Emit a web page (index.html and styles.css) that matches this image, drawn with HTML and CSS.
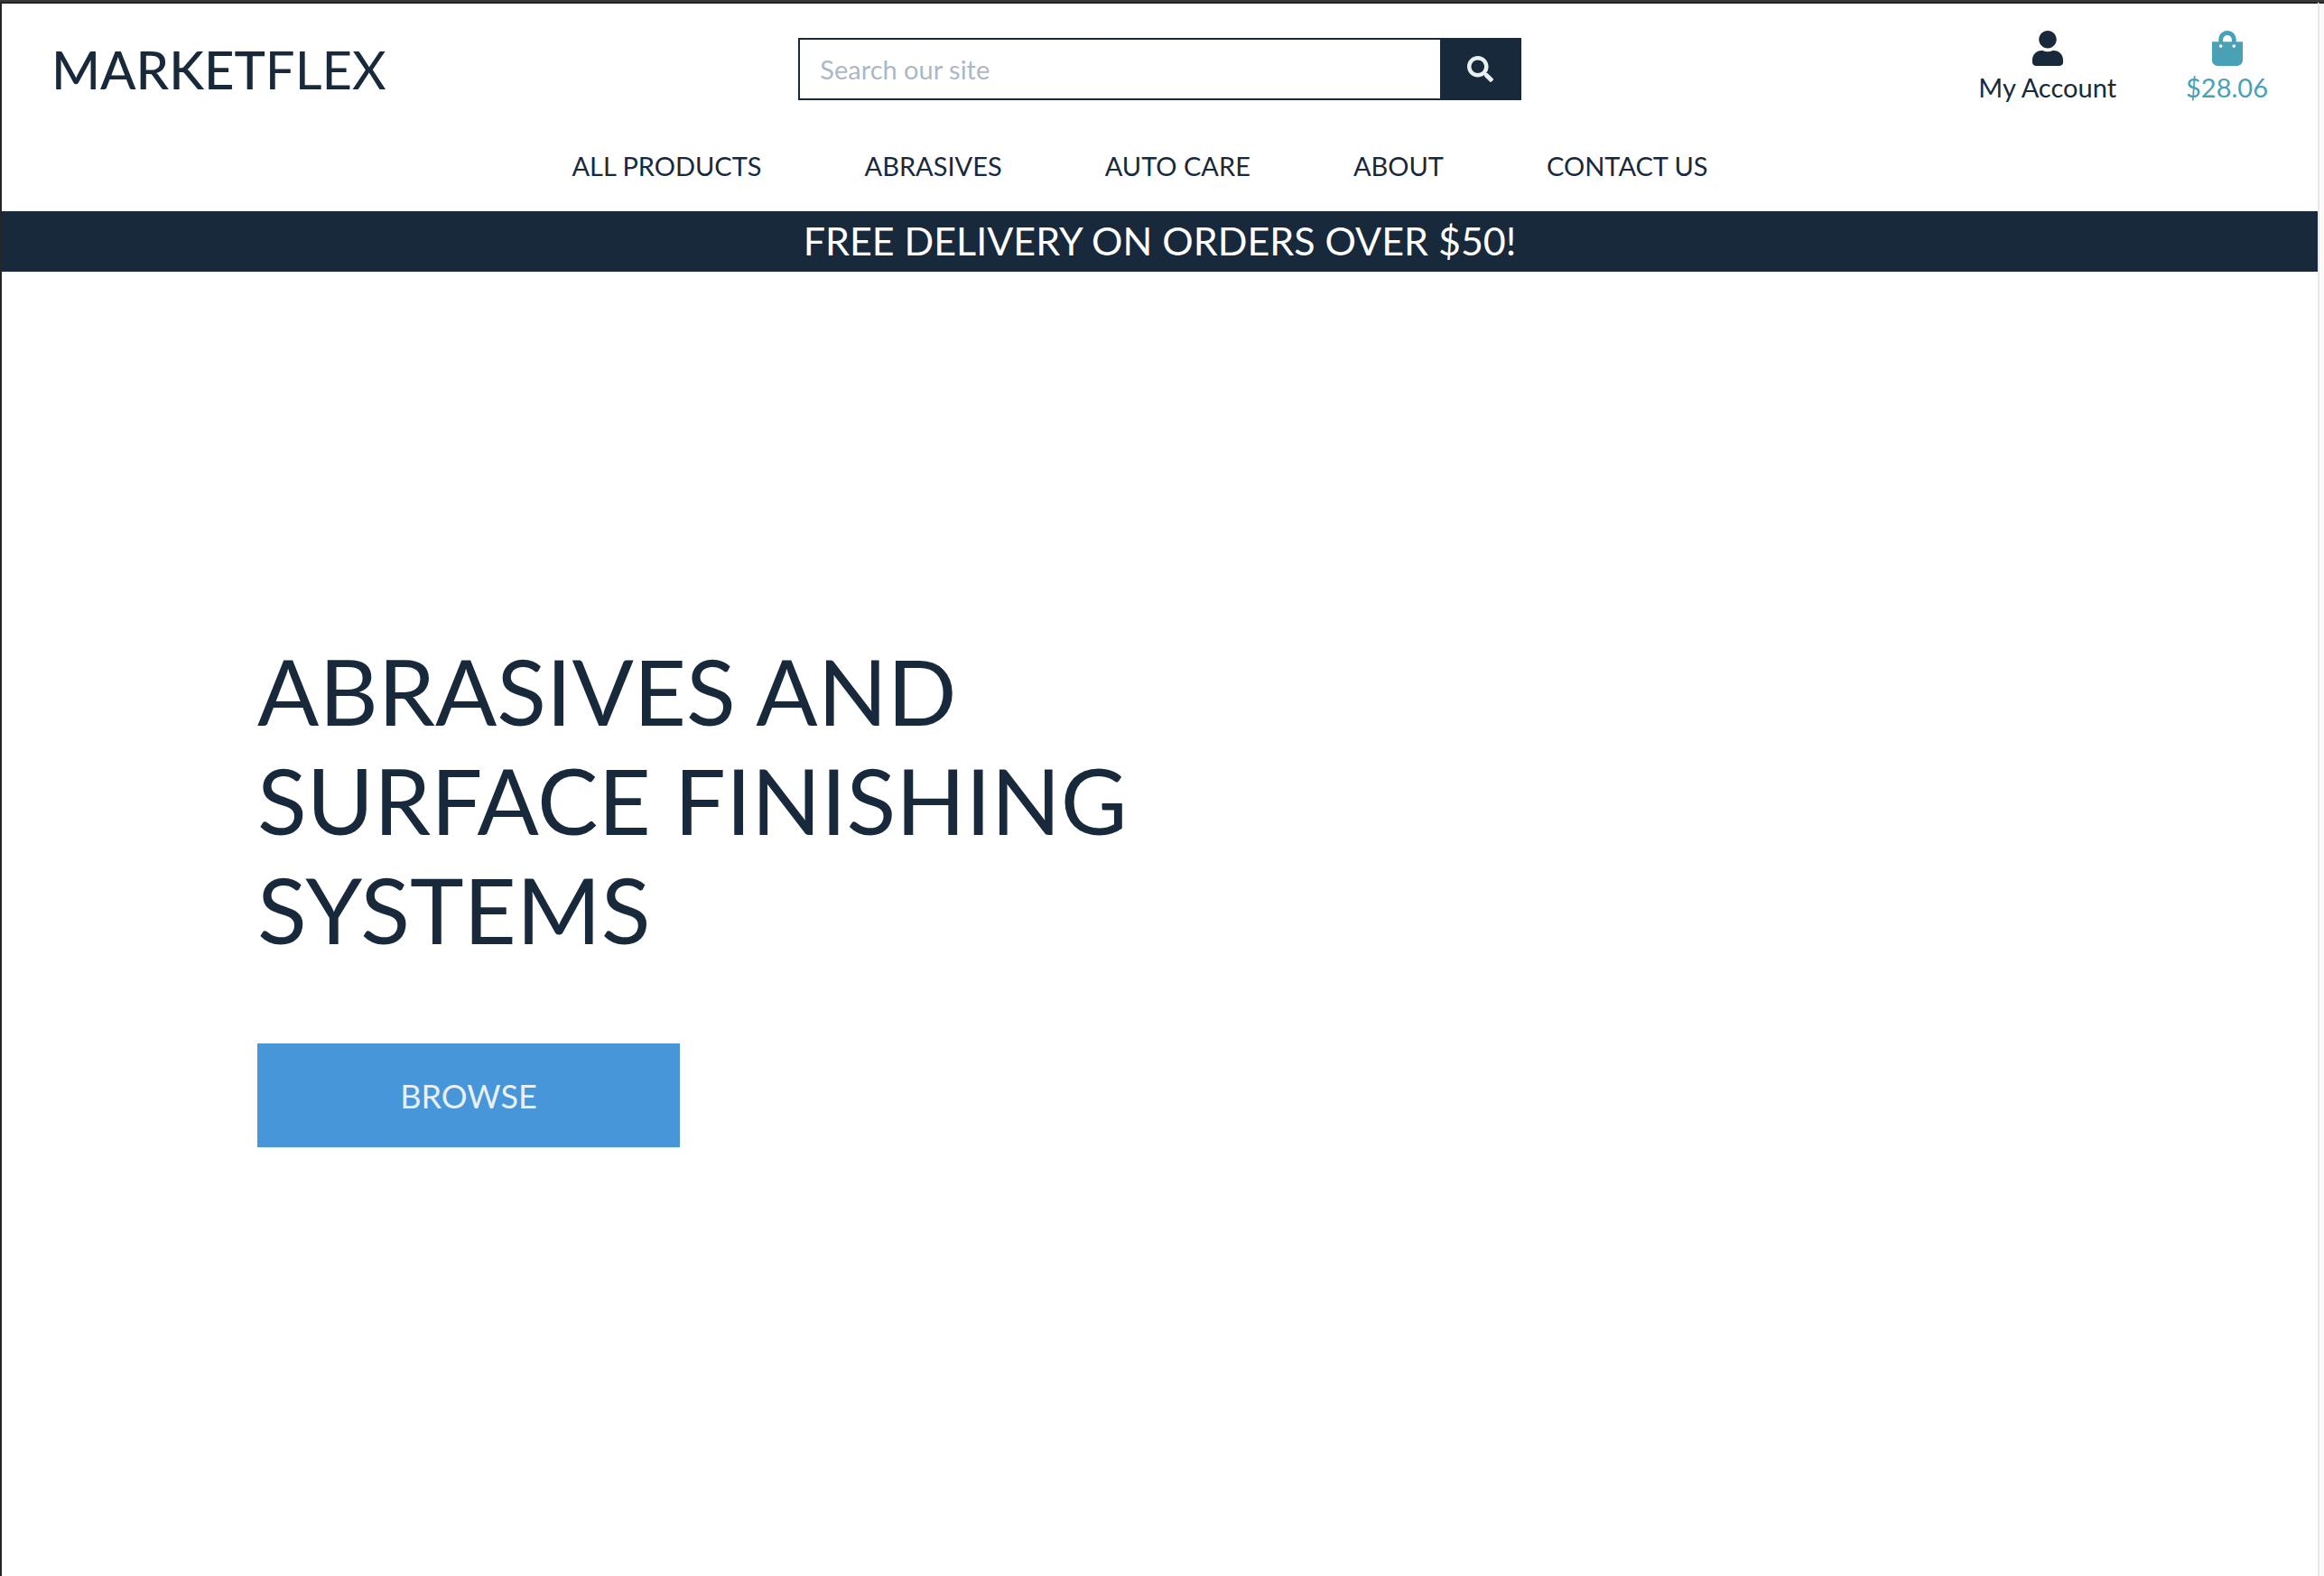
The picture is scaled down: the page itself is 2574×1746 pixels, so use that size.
FILE: index.html
```html
<!DOCTYPE html>
<html lang="en">
<head>
  <meta charset="utf-8">
  <meta name="viewport" content="width=device-width, initial-scale=1">
  <title>MarketFlex</title>
  <link rel="stylesheet" href="styles.css">
</head>
<body>
  <div class="page">
    <header class="header">
      <div class="topbar">
        <a class="logo" href="#"><span class="logo-strong">MARKET</span><span class="logo-light">FLEX</span></a>
        <form class="search" role="search">
          <input class="search-input" type="text" placeholder="Search our site" aria-label="Search our site">
          <button class="search-button" type="submit" aria-label="Search">
            <svg class="search-icon" viewBox="0 0 512 512" aria-hidden="true"><path fill="currentColor" d="M505 442.700 405.300 343c-4.500-4.500-10.600-7-17-7H372c27.600-35.300 44-79.700 44-128C416 93.100 322.900 0 208 0S0 93.100 0 208s93.100 208 208 208c48.300 0 92.700-16.400 128-44v16.300c0 6.400 2.500 12.500 7 17l99.700 99.700c9.400 9.400 24.600 9.400 33.900 0l28.300-28.300c9.400-9.400 9.400-24.600.1-34zM208 336c-70.700 0-128-57.200-128-128 0-70.700 57.200-128 128-128 70.700 0 128 57.200 128 128 0 70.700-57.200 128-128 128z"/></svg>
          </button>
        </form>
        <div class="actions">
          <a class="action" href="#">
            <svg class="action-icon" viewBox="0 0 448 512" aria-hidden="true"><path fill="currentColor" d="M224 256c70.700 0 128-57.300 128-128S294.700 0 224 0 96 57.300 96 128s57.300 128 128 128zm89.600 32h-16.700c-22.200 10.200-46.900 16-72.900 16s-50.600-5.800-72.900-16h-16.700C60.200 288 0 348.200 0 422.400V464c0 26.500 21.500 48 48 48h352c26.500 0 48-21.500 48-48v-41.600c0-74.200-60.200-134.400-134.400-134.400z"/></svg>
            <span>My Account</span>
          </a>
          <a class="action action-bag" href="#">
            <svg class="action-icon" viewBox="0 0 448 512" aria-hidden="true"><path fill="currentColor" d="M352 160v-32C352 57.420 294.579 0 224 0 153.420 0 96 57.420 96 128v32H0v272c0 44.183 35.817 80 80 80h288c44.183 0 80-35.817 80-80V160h-96zm-192-32c0-35.290 28.710-64 64-64s64 28.710 64 64v32H160v-32zm160 120c-13.255 0-24-10.745-24-24s10.745-24 24-24 24 10.745 24 24-10.745 24-24 24zm-192 0c-13.255 0-24-10.745-24-24s10.745-24 24-24 24 10.745 24 24-10.745 24-24 24z"/></svg>
            <span>$28.06</span>
          </a>
        </div>
      </div>
      <nav class="nav" aria-label="Main">
        <a class="nav-link" href="#">ALL PRODUCTS</a>
        <a class="nav-link" href="#">ABRASIVES</a>
        <a class="nav-link" href="#">AUTO CARE</a>
        <a class="nav-link" href="#">ABOUT</a>
        <a class="nav-link" href="#">CONTACT US</a>
      </nav>
    </header>
    <p class="banner">FREE DELIVERY ON ORDERS OVER $50!</p>
    <main class="hero">
      <h1 class="hero-title">ABRASIVES AND SURFACE FINISHING SYSTEMS</h1>
      <button class="browse" type="button">BROWSE</button>
    </main>
  </div>
  <div class="gutter" aria-hidden="true"></div>
</body>
</html>
```
FILE: styles.css
```css
:root {
  --navy: #18293b;
  --teal: #4aa0b5;
  --blue: #4696d9;
  --frost: #e8f0f2;
}

*,
*::before,
*::after {
  box-sizing: border-box;
}

body {
  margin: 0;
  min-height: 100vh;
  display: flex;
  border-top: 2px solid #3a3a3b;
  background: #fff;
  color: var(--navy);
  font-family: Lato, "Liberation Sans", sans-serif;
  font-size: 29px;
  line-height: 36px;
}

a {
  color: inherit;
  text-decoration: none;
}

.page {
  flex: 1;
  min-width: 0;
  border-top: 2px solid #252526;
  border-left: 2px solid #252526;
}

.gutter {
  width: 7px;
  border-top: 2px solid #252526;
  border-left: 2px solid #e8e8e8;
  background: #fafafa;
}

.topbar {
  display: grid;
  grid-template-columns: repeat(3, 1fr);
  column-gap: 54px;
  padding: 28px 55px 0;
}

.logo {
  padding-top: 5px;
  font-size: 58px;
  line-height: 80px;
}

.logo-strong {
  font-weight: 500;
}

.search {
  display: flex;
  height: 69px;
  margin: 10px -9px 0;
}

.search-input {
  flex: 1;
  min-width: 0;
  padding: 0 22px;
  border: 2px solid var(--navy);
  border-right: 0;
  border-radius: 0;
  outline: 0;
  background: #fff;
  color: var(--navy);
  font: inherit;
}

.search-input::placeholder {
  color: #adb8c6;
  opacity: 1;
}

.search-button {
  display: flex;
  align-items: center;
  justify-content: center;
  width: 90px;
  padding: 0;
  border: 0;
  background: var(--navy);
  color: var(--frost);
}

.search-icon {
  width: 29px;
  height: 29px;
}

.actions {
  display: flex;
  justify-content: flex-end;
  align-items: flex-start;
  gap: 77px;
}

.action {
  display: flex;
  flex-direction: column;
  align-items: center;
  gap: 6px;
}

.action-bag {
  color: var(--teal);
}

.action-icon {
  width: 34px;
  height: 39px;
  margin-top: 2px;
}

.nav {
  display: flex;
  justify-content: center;
  gap: 114px;
  padding: 49px 44px 32px 0;
}

.banner {
  margin: 0;
  padding: 5px 0 6px;
  background: var(--navy);
  color: #fff;
  font-size: 43px;
  line-height: 56px;
  text-align: center;
}

.hero {
  padding: 404px 283px 120px;
}

.hero-title {
  max-width: 1000px;
  margin: 0 0 88px;
  font-size: 101px;
  font-weight: 400;
  line-height: 121px;
}

.browse {
  display: block;
  width: 468px;
  height: 115px;
  padding: 0;
  border: 0;
  background: var(--blue);
  color: var(--frost);
  font: inherit;
  font-size: 36px;
}
```
